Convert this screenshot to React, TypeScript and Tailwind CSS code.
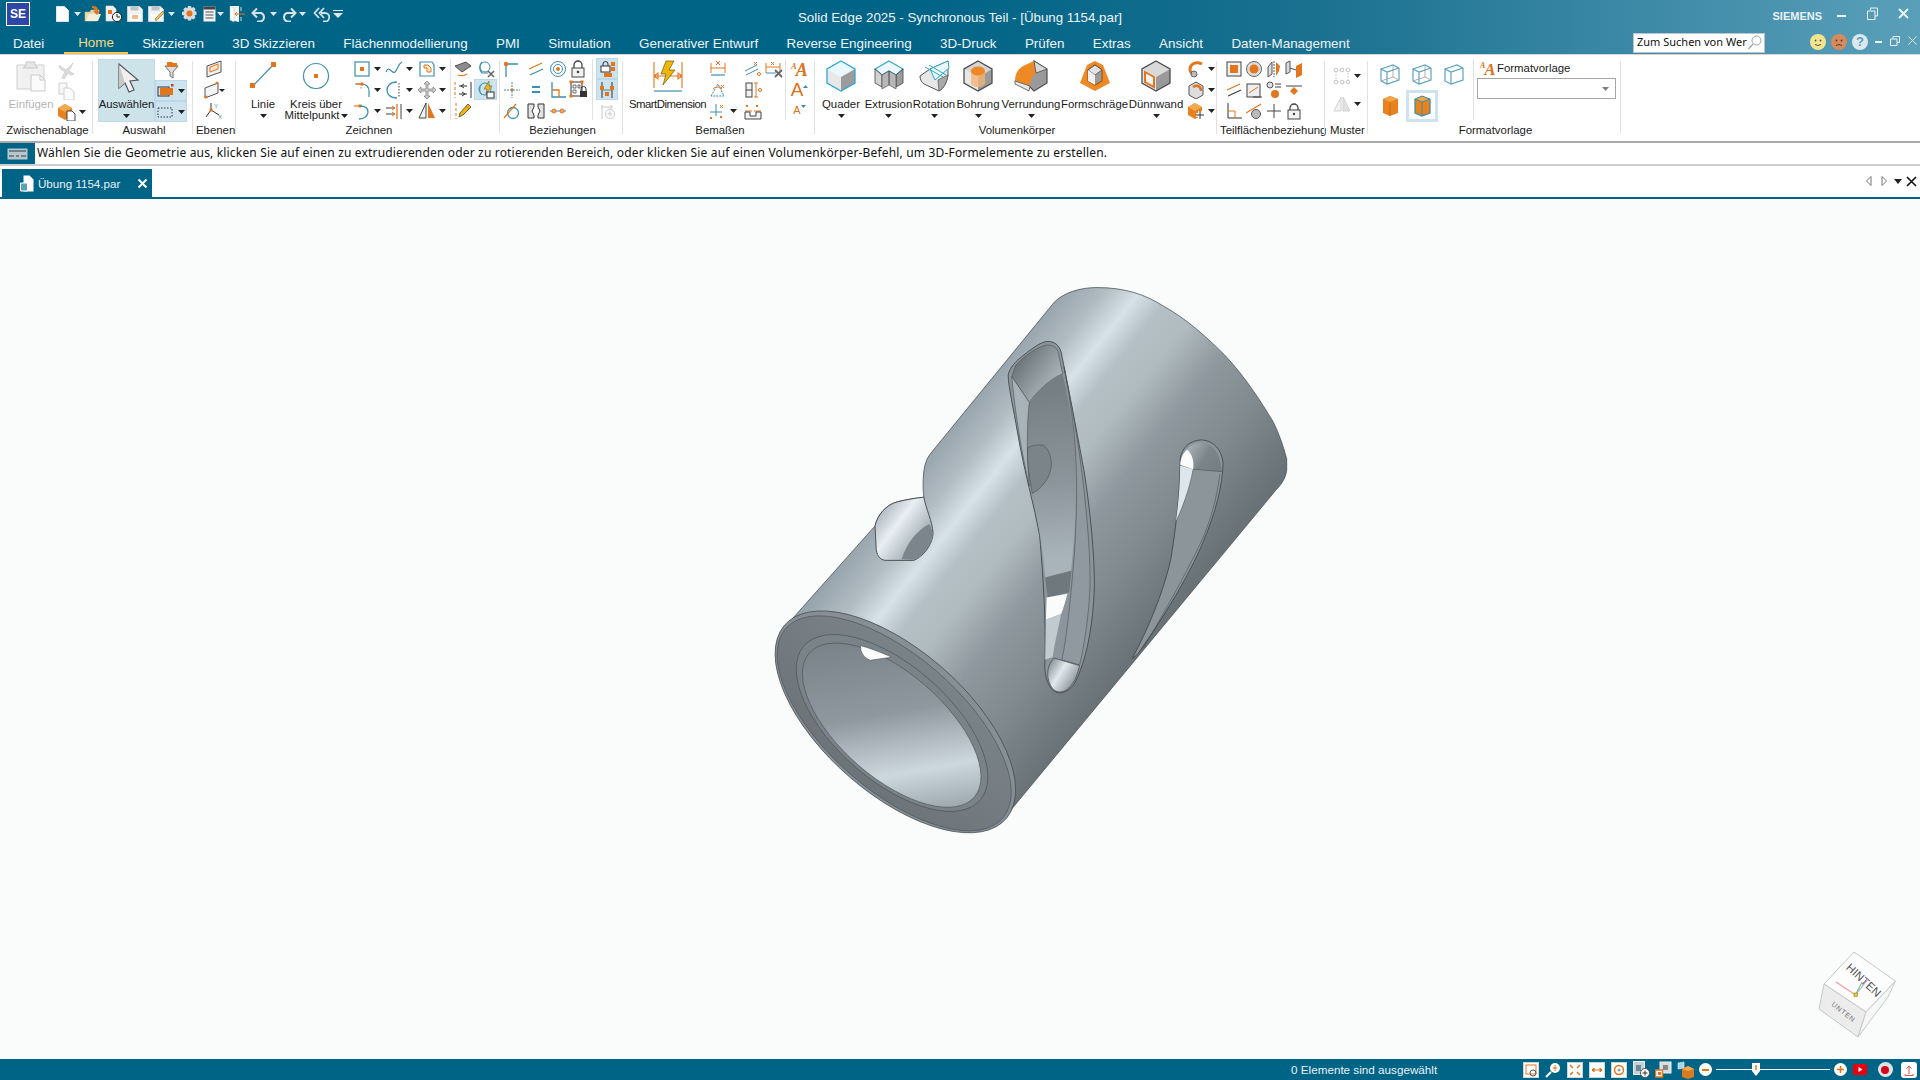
import type { ReactNode } from "react";

const OR = "#e3761c";
const TL = "#3d8fae";

function Px({ w = 18, h = 18, children }: { w?: number; h?: number; children: ReactNode }) {
  return (
    <svg width={w} height={h} viewBox={`0 0 ${w} ${h}`} className="block shrink-0">
      {children}
    </svg>
  );
}

function Arrow({ light = false }: { light?: boolean }) {
  return (
    <svg width="7" height="4" viewBox="0 0 7 4" className="block shrink-0">
      <path d="M0 0h7L3.5 4z" fill={light ? "#dfe8ec" : "#222"} />
    </svg>
  );
}

function Dot({ x, y, s = 4, c = OR }: { x: number; y: number; s?: number; c?: string }) {
  return <rect x={x - s / 2} y={y - s / 2} width={s} height={s} fill={c} />;
}

/* ---------- quick access toolbar ---------- */
const qat = (
  <div className="flex items-center ml-[13px] h-full">
    <div className="w-[18px] flex justify-center ml-[10px]">
      <Px w={13} h={16}><path d="M.5.5h8l4 4v11H.5z" fill="#fff" stroke="#dfe8ec" /></Px>
    </div>
    <div className="w-[8px] ml-[3px]"><Arrow light /></div>
    <div className="ml-[2px]">
      <Px w={18} h={17}>
        <path d="M1 7h5l1-2h8l-2 11H1z" fill="#e9d9ae" stroke="#c8b98a" strokeWidth=".6" />
        <path d="M2 16l3-7h12l-3 7z" fill="#f6f0da" />
        <path d="M8 1c4 0 6 1 6 5h2l-3 4-4-4h2c0-2-1-3-3-3z" fill={OR} />
      </Px>
    </div>
    <div className="ml-[3px]">
      <Px w={18} h={17}>
        <path d="M1 1h7l3 3v12H1z" fill="#f1f1f1" stroke="#ddd" strokeWidth=".6" />
        <rect x="3" y="5" width="4" height="4" fill={OR} />
        <circle cx="12" cy="12" r="4.6" fill="#f4f4f4" stroke="#222" />
        <path d="M12 9v3h3" fill="none" stroke="#222" />
      </Px>
    </div>
    <div className="ml-[4px]">
      <Px w={16} h={16}>
        <path d="M.5.5h12l3 3v12H.5z" fill="#f2f2f2" stroke="#c9d3d8" />
        <path d="M3.5.5h8v4h-8z" fill="#bcc4c8" />
        <path d="M3 8h10v7H3z" fill="#fff" />
        <path d="M5 10h6M5 12h6" stroke={OR} />
      </Px>
    </div>
    <div className="ml-[5px]">
      <Px w={17} h={16}>
        <path d="M.5.5h12l3 3v12H.5z" fill="#f2f2f2" stroke="#c9d3d8" />
        <path d="M3.5.5h8v4h-8z" fill="#bcc4c8" />
        <path d="M3 8h7v7H3z" fill="#fff" />
        <path d="M8 15l8-8-1-2-8 8z" fill="#f4c142" stroke="#555" strokeWidth=".5" />
      </Px>
    </div>
    <div className="ml-[3px]"><Arrow light /></div>
    <div className="ml-[7px]">
      <Px w={15} h={15}>
        <path d="M6 0h3l.5 2 2-1 2 2-1 2 2 .8v3l-2 .7 1 2-2 2-2-1-.5 2H6l-.7-2-2 1-2-2 1-2L0 9V6l2.300-.7-1-2 2-2 2 1z" fill="#d9dcdc" />
        <circle cx="7.5" cy="7.5" r="3" fill={OR} />
      </Px>
    </div>
    <div className="ml-[6px]">
      <Px w={13} h={16}>
        <rect x=".5" y=".5" width="12" height="15" fill="#f2f2f2" />
        <rect x=".5" y=".5" width="12" height="3" fill="#444" />
        <path d="M2.5 6h8M2.5 9h8M2.5 12h8" stroke="#555" />
      </Px>
    </div>
    <div className="ml-[1px]"><Arrow light /></div>
    <div className="ml-[5px]">
      <Px w={18} h={18}>
        <path d="M1 1h9v16l-9-2z" fill="#f5f5f5" />
        <path d="M1 1l4 2v14l-4-2z" fill="#fff" stroke="#aebcc3" strokeWidth=".5" />
        <path d="M12 2v4M12 12v4" stroke="#cfe0e6" />
        <path d="M7 9h9M8 7l-2 2 2 2" stroke={OR} fill="none" />
      </Px>
    </div>
    <div className="ml-[4px]">
      <Px w={17} h={17}>
        <path d="M2 8h8a4.5 4.5 0 0 1 0 8.500H6M6 3.500L1.500 8 6 12.500" fill="none" stroke="#d6e0e5" strokeWidth="2" />
      </Px>
    </div>
    <div className="ml-[2px]"><Arrow light /></div>
    <div className="ml-[3px]">
      <Px w={17} h={17}>
        <path d="M15 8H7a4.5 4.5 0 0 0 0 8.500h4M11 3.500L15.500 8 11 12.500" fill="none" stroke="#d6e0e5" strokeWidth="2" />
      </Px>
    </div>
    <div className="ml-[2px]"><Arrow light /></div>
    <div className="ml-[6px]">
      <Px w={18} h={17}>
        <path d="M9 8h4a4 4 0 0 1 0 8.500H11M7 3L2.500 8 7 13M12 3L7.500 8 12 13" fill="none" stroke="#d6e0e5" strokeWidth="1.800" />
      </Px>
    </div>
    <div className="ml-[3px] flex flex-col gap-[2px]">
      <div className="h-[1px] w-[10px] bg-[#dfe8ec]" />
      <Px w={10} h={5}><path d="M0 0h10L5 5z" fill="#dfe8ec" /></Px>
    </div>
  </div>
);

/* ---------- ribbon helpers ---------- */
function Sep({ inner = false }: { inner?: boolean }) {
  return <div className={inner ? "w-px h-[61px] mt-[1px] bg-[#e1e1e1] shrink-0" : "w-px h-[73px] mt-[6px] bg-[#e1e1e1] shrink-0"} />;
}

function Group({ w, label, children }: { w: string; label: string; children: ReactNode }) {
  return (
    <div className={`${w} shrink-0 flex flex-col pt-[3px]`}>
      <div className="flex h-[63px]">{children}</div>
      <div className="h-[18px] pl-[3px] leading-[18px] text-center text-[11.4px] text-[#1a1a1a] whitespace-nowrap">{label}</div>
    </div>
  );
}

function Big({ w, label, arrow = true, icon, muted = false }: { w: string; label: ReactNode; arrow?: boolean; icon: ReactNode; muted?: boolean }) {
  return (
    <div className={`${w} shrink-0 flex flex-col items-center`}>
      <div className="h-[40px] pb-1 flex items-center justify-center">{icon}</div>
      <div className={`h-[13px] leading-[13px] text-[11.4px] whitespace-nowrap ${muted ? "text-[#b4b4b4]" : "text-[#1a1a1a]"}`}>{label}</div>
      {arrow && <div className="mt-[3px]"><Arrow /></div>}
    </div>
  );
}

function Cell({ icon, arrow = false, on = false }: { icon: ReactNode; arrow?: boolean; on?: boolean }) {
  return (
    <div className={`h-[21px] flex items-center justify-center gap-[4px] ${on ? "bg-[#cde3ee] border border-[#bcd6ea]" : ""}`}>
      {icon}
      {arrow && <Arrow />}
    </div>
  );
}

/* cell that starts its icon at the left edge, the drop arrow follows */
function Left({ icon, arrow = false }: { icon: ReactNode; arrow?: boolean }) {
  return (
    <div className="h-[21px] flex items-center gap-[3px]">
      {icon}
      {arrow && <Arrow />}
    </div>
  );
}

function Hex({ s = "#4d4d4d", t = "#d9d9d9", l = "#e8e8e8", r = "#9a9a9a", children }: { s?: string; t?: string; l?: string; r?: string; children?: ReactNode }) {
  return (
    <Px w={32} h={32}>
      <path d="M16 1L30 9 16 17 2 9z" fill={t} />
      <path d="M2 9L16 17V31L2 23z" fill={l} />
      <path d="M30 9L16 17V31L30 23z" fill={r} />
      <path d="M16 1L30 9V23L16 31 2 23V9z" fill="none" stroke={s} strokeWidth="1.3" />
      {children}
    </Px>
  );
}

function Wire({ back = true, solid = false, edge = false }: { back?: boolean; solid?: boolean; edge?: boolean }) {
  if (solid) {
    return (
      <Px w={22} h={22}>
        <path d="M4 4l7-3 8 3v14l-8 3-7-3z" fill="#e8821e" />
        <path d="M4 4l7 3 8-3-8-3z" fill="#f3a445" stroke={edge ? TL : "none"} />
        <path d="M11 7v14" stroke={edge ? TL : "#c96b12"} />
        <path d="M4 4v14l7 3 8-3V4" fill="none" stroke={edge ? TL : "none"} strokeWidth="1.3" />
      </Px>
    );
  }
  return (
    <Px w={22} h={22}>
      <path d="M2 6l12-4 6 3v12l-12 4-6-3z" fill="none" stroke="#5aa3bf" strokeWidth="1.2" />
      <path d="M2 6l6 3 12-4M8 9v12" fill="none" stroke="#5aa3bf" strokeWidth="1.2" />
      {back && <path d="M14 2v12l-12 4M14 14l6 3" fill="none" stroke="#a0a8ac" strokeWidth=".9" />}
    </Px>
  );
}

/* ---------- viewport drawing ---------- */
function Part() {
  const line = "#454d51";
  return (
    <svg width="580" height="600" viewBox="0 0 1568 1568" preserveAspectRatio="none" className="absolute left-[740px] top-[61px]">
      <defs>
        <linearGradient id="body" gradientUnits="userSpaceOnUse" x1="300" y1="760" x2="890" y2="1250">
          <stop offset="0" stopColor="#98a4ac" />
          <stop offset=".12" stopColor="#b0bbc2" />
          <stop offset=".22" stopColor="#d7e1e8" />
          <stop offset=".31" stopColor="#b5c0c6" />
          <stop offset=".42" stopColor="#b0bbc0" />
          <stop offset=".58" stopColor="#8e989e" />
          <stop offset=".78" stopColor="#7f898e" />
          <stop offset="1" stopColor="#697276" />
        </linearGradient>
        <linearGradient id="bore" gradientUnits="userSpaceOnUse" x1="240" y1="1030" x2="650" y2="1380">
          <stop offset="0" stopColor="#788187" />
          <stop offset=".42" stopColor="#8f989e" />
          <stop offset=".72" stopColor="#cdd8de" />
          <stop offset=".86" stopColor="#adb8be" />
          <stop offset="1" stopColor="#8b959b" />
        </linearGradient>
        <linearGradient id="ring" x1="0" y1="0" x2="0" y2="1">
          <stop offset="0" stopColor="#7a8388" />
          <stop offset="1" stopColor="#6c7478" />
        </linearGradient>
        <linearGradient id="notch" gradientUnits="userSpaceOnUse" x1="370" y1="660" x2="510" y2="770">
          <stop offset="0" stopColor="#a9b4bb" />
          <stop offset=".35" stopColor="#e9eff3" />
          <stop offset=".7" stopColor="#b0bbc1" />
          <stop offset="1" stopColor="#8a949a" />
        </linearGradient>
        <linearGradient id="slotTop" gradientUnits="userSpaceOnUse" x1="770" y1="250" x2="860" y2="320">
          <stop offset="0" stopColor="#6f787d" />
          <stop offset="1" stopColor="#adb8be" />
        </linearGradient>
        <linearGradient id="slotMid" gradientUnits="userSpaceOnUse" x1="820" y1="340" x2="860" y2="780">
          <stop offset="0" stopColor="#757f84" />
          <stop offset=".55" stopColor="#8b959b" />
          <stop offset="1" stopColor="#a9b4ba" />
        </linearGradient>
        <linearGradient id="slotCap" gradientUnits="userSpaceOnUse" x1="835" y1="1060" x2="910" y2="1110">
          <stop offset="0" stopColor="#8f999f" />
          <stop offset=".4" stopColor="#e2e9ed" />
          <stop offset="1" stopColor="#838d93" />
        </linearGradient>
        <linearGradient id="capTwo" gradientUnits="userSpaceOnUse" x1="1210" y1="490" x2="1300" y2="550">
          <stop offset="0" stopColor="#a7b2b8" />
          <stop offset=".5" stopColor="#7a8489" />
          <stop offset="1" stopColor="#747e83" />
        </linearGradient>
      </defs>

      <path
        d="M130 950L365 695C372 665 395 640 425 632C450 626 475 622 497 620C493 590 495 550 502 530C505 520 510 512 520 500L850 110C875 85 920 72 965 72C1040 72 1095 90 1144 120C1210 155 1265 205 1310 248C1370 310 1415 380 1442 424C1458 455 1470 490 1478 520V550C1475 570 1465 585 1450 600L730 1440 600 1490z"
        fill="url(#body)"
        stroke={line}
        strokeWidth="2"
      />

      {/* notch at the upper edge */}
      <path d="M365 695C372 665 395 640 425 632C450 626 475 622 497 620C502 650 520 680 522 715C520 745 495 775 470 785H395C378 785 368 770 368 750z" fill="url(#notch)" stroke={line} strokeWidth="2.500" />
      <path d="M437 782C450 740 480 705 512 690C520 705 522 720 520 730C510 755 490 775 470 783z" fill="#7b858b" />

      {/* long slot */}
      <path d="M830 213C850 212 862 222 868 240C885 320 905 420 930 550C948 660 958 770 958 850C955 960 935 1050 905 1105C890 1130 860 1140 843 1122C825 1100 822 1070 825 1040C826 950 822 850 810 720C795 640 770 560 750 450C740 390 725 330 725 300C730 280 745 265 765 250C785 235 810 215 830 213z" fill="#8b959b" stroke={line} strokeWidth="2.500" />
      <path d="M735 305L745 275C770 250 800 228 830 222C848 222 856 230 860 240L872 297C840 310 805 340 782 372z" fill="url(#slotTop)" stroke={line} strokeWidth="1.500" />
      <path d="M782 372C805 340 840 310 872 297C885 350 900 420 906 500C912 620 905 720 895 812L825 830C818 740 800 650 782 590C775 520 775 430 782 372z" fill="url(#slotMid)" />
      <path d="M735 305L782 372C775 430 775 520 782 590C770 540 745 420 735 305z" fill="#a8b3b9" stroke={line} strokeWidth="1.500" />
      <path d="M778 490C790 484 808 482 820 484C835 495 842 515 842 535C840 565 820 595 790 610C783 570 775 530 778 490z" fill="#7a8489" stroke={line} strokeWidth="1.500" />
      <path d="M876 280C895 370 912 460 925 560C940 680 948 780 946 860C942 940 930 1010 918 1058L870 1045C885 980 895 870 903 780C912 660 912 560 905 470C898 400 888 340 876 280z" fill="#8f999f" stroke={line} strokeWidth="1.500" />
      <path d="M825 830L896 812 890 868 832 882z" fill="#6e787d" />
      <path d="M829 882L885 872C880 890 875 910 868 925L827 940z" fill="#fafcfb" />
      <path d="M827 940L868 925C860 965 850 1005 845 1038L825 1044z" fill="#c0cbd1" />
      <path d="M848 1040L918 1060C912 1085 905 1100 895 1112C880 1130 860 1135 845 1120C828 1098 826 1065 848 1040z" fill="url(#slotCap)" stroke={line} strokeWidth="2" />

      {/* short slot */}
      <path d="M1190 520C1195 490 1215 472 1248 470C1280 472 1302 495 1306 530C1305 590 1285 660 1255 730C1225 800 1170 900 1075 1030L1060 1042C1100 970 1145 870 1165 780C1180 690 1190 600 1190 520z" fill="#8b959a" stroke={line} strokeWidth="2.500" />
      <path d="M1208 495C1220 482 1235 476 1250 476C1280 480 1298 505 1303 553L1225 546C1228 525 1222 505 1208 495z" fill="url(#capTwo)" />
      <path d="M1190 535C1192 515 1198 505 1208 495C1222 505 1228 525 1225 547z" fill="#fafcfb" />
      <path d="M1190 538L1225 547C1218 590 1200 640 1178 685C1185 640 1190 590 1190 538z" fill="#dde6ea" />
      <path d="M1225 547L1303 553" stroke={line} strokeWidth="1.500" />
      <path d="M1297 560C1290 620 1270 690 1245 740C1210 810 1160 900 1090 1015" fill="none" stroke={line} strokeWidth="1.500" />
      <path d="M1225 547C1215 600 1195 650 1178 685" fill="none" stroke={line} strokeWidth="1.500" />

      {/* front face with bore */}
      <g transform="rotate(39.7 420 1207)">
        <ellipse cx="420" cy="1207" rx="392" ry="190" fill="#868f95" stroke={line} strokeWidth="2" />
        <ellipse cx="420" cy="1212" rx="384" ry="178" fill="url(#ring)" stroke={line} strokeWidth="1.500" />
        <ellipse cx="415" cy="1215" rx="312" ry="152" fill="#7a8388" stroke={line} strokeWidth="1.500" />
        <ellipse cx="418" cy="1220" rx="292" ry="138" fill="url(#bore)" stroke={line} strokeWidth="1.500" />
      </g>
      <path d="M326 1008C345 1012 380 1025 410 1038L352 1046C335 1040 325 1025 326 1008z" fill="#fbfdfd" stroke={line} strokeWidth="1.500" />
    </svg>
  );
}

function ViewCube() {
  return (
    <svg width="95" height="100" viewBox="0 0 95 100" className="absolute left-[1810px] top-[746px]">
      <path d="M44 7L85.500 36 56 67 14 39z" fill="#fdfdfd" stroke="#c4c8c8" />
      <path d="M14 39L56 67 48 92 9 64z" fill="#ececec" stroke="#c4c8c8" />
      <path d="M85.500 36L56 67 48 92 78 52z" fill="#f6f6f6" stroke="#c4c8c8" />
      <text x="51" y="38" textAnchor="middle" transform="rotate(43 51 38)" fontSize="11.5" fontFamily="'Liberation Sans',sans-serif" fill="#555">HINTEN</text>
      <text x="32" y="69" textAnchor="middle" transform="rotate(38 32 69)" fontSize="7" letterSpacing=".8" fontFamily="'Liberation Sans',sans-serif" fill="#777">UNTEN</text>
      <path d="M45.500 50L26 37" stroke="#ef9a9a" strokeWidth="1.2" />
      <path d="M45.500 50L52 37" stroke="#7fc77f" strokeWidth="1.2" />
      <path d="M45.500 50L58 34" stroke="#a9a9f0" strokeWidth="1.2" />
      <rect x="44" y="48" width="3.5" height="3.5" fill="#e3d21c" stroke="#6b6b20" strokeWidth=".5" />
    </svg>
  );
}

/* ---------- status bar icons ---------- */
function SBox({ children }: { children: ReactNode }) {
  return (
    <Px w={16} h={16}>
      <rect x=".5" y=".5" width="15" height="15" fill="#fff" stroke="#c9d6dc" />
      {children}
    </Px>
  );
}

export default function App() {
  const tabs = ["Skizzieren", "3D Skizzieren", "Flächenmodellierung", "PMI", "Simulation", "Generativer Entwurf", "Reverse Engineering", "3D-Druck", "Prüfen", "Extras", "Ansicht", "Daten-Management"];

  return (
    <div className="w-[1920px] h-[1080px] overflow-hidden flex flex-col bg-white font-['Liberation_Sans',Arial,sans-serif]">
      {/* title bar + menu */}
      <header className="h-[54px] shrink-0 bg-[linear-gradient(90deg,#006487_0%,#006487_48%,#19708f_68%,#5a9fba_100%)] text-[#eef5f8]">
        <div className="h-[27px] grid grid-cols-[1fr_auto_1fr] items-center">
          <div className="flex items-center h-full">
            <div className="ml-[6px] w-[24px] h-[24px] bg-[#2c47a7] border border-white flex items-center justify-center text-[12px] font-bold text-white">SE</div>
            {qat}
          </div>
          <div className="text-[13.3px] pt-[8px] leading-[19px] text-center">Solid Edge 2025 - Synchronous Teil - [Übung 1154.par]</div>
          <div className="flex items-center justify-end h-full">
            <span className="text-[11px] font-bold text-[#e9f2f5] mr-[4px] mt-[5px]">SIEMENS</span>
            <div className="w-[31px] flex justify-center pt-[4px]"><div className="w-[9px] h-[2px] bg-[#eef5f8]" /></div>
            <div className="w-[31px] flex justify-center">
              <Px w={11} h={13}><path d="M3.500 3V1h7v8H8M.5 4h7.500v8.500H.5z" fill="none" stroke="#eef5f8" /></Px>
            </div>
            <div className="w-[31px] mr-[1px] flex justify-center">
              <Px w={11} h={11}><path d="M1 1l9 9M10 1l-9 9" stroke="#eef5f8" strokeWidth="1.8" /></Px>
            </div>
          </div>
        </div>
        <div className="h-[27px] flex items-center">
          <div className="pl-[13px] w-[64px] text-[13.4px] pt-[6px] leading-[21px] h-[27px]">Datei</div>
          <div className="w-[64px] h-[27px] text-center text-[13.4px] pt-[7px] leading-[18px] text-[#f6d981] border-b-2 border-[#f1c64f]">Home</div>
          {tabs.map((t) => (
            <div key={t} className="px-[14.2px] h-[27px] text-[13.4px] pt-[7px] leading-[20px] whitespace-nowrap">{t}</div>
          ))}
          <div className="flex-1" />
          <div className="w-[132px] h-[20px] mt-[4px] bg-white border border-[#b8c6cc] flex items-center pl-[3px] pr-[2px]">
            <span className="text-[11px] text-[#111] whitespace-nowrap w-[110px] font-['Noto_Sans',sans-serif]">Zum Suchen von Wer</span>
            <Px w={15} h={15}><circle cx="9.5" cy="5.5" r="4.5" fill="none" stroke="#9aa5aa" /><path d="M6 9l-4.500 5" stroke="#9aa5aa" strokeWidth="1.3" /></Px>
          </div>
          <div className="ml-[45px] mt-[2px] flex items-center gap-[5px]">
            <Px w={16} h={16}>
              <circle cx="8" cy="8" r="8" fill="#f4e48c" />
              <circle cx="5.5" cy="6.5" r=".9" fill="#555" /><circle cx="10.5" cy="6.5" r=".9" fill="#555" />
              <path d="M5 10.500q3 2 6 0" fill="none" stroke="#555" />
            </Px>
            <Px w={16} h={16}>
              <circle cx="8" cy="8" r="8" fill="#d88a5c" />
              <circle cx="5.5" cy="6.5" r=".9" fill="#444" /><circle cx="10.5" cy="6.5" r=".9" fill="#444" />
              <path d="M5 11.500q3-2 6 0" fill="none" stroke="#444" />
            </Px>
            <div className="w-[16px] h-[16px] rounded-full bg-[#dbe8ee] text-[#5a9fba] text-[13px] leading-[16px] font-bold text-center">?</div>
          </div>
          <div className="ml-[7px] w-[7px] h-[2px] mt-[3px] bg-[#eef5f8]" />
          <div className="ml-[8px]"><Px w={10} h={10}><path d="M3 2.500V.5h6.500v6H7.500M.5 3h6.500v6.500H.5z" fill="none" stroke="#eef5f8" /></Px></div>
          <div className="ml-[8px] mr-[3px]"><Px w={9} h={9}><path d="M.5.5l8 8M8.500.5l-8 8" stroke="#eef5f8" /></Px></div>
        </div>
      </header>

      {/* ribbon */}
      <div className="h-[87px] shrink-0 border-t border-[#d6d6d6] flex bg-white">
        <Group w="w-[92px]" label="Zwischenablage">
          <div className="w-[5px]" />
          <Big
            w="w-[52px]"
            label="Einfügen"
            arrow={false}
            muted
            icon={
              <Px w={32} h={32}>
                <path d="M2 5h27v24H2z" fill="#f1f1f1" stroke="#cfcfcf" />
                <path d="M11 5V2h9v3l3 3H8z" fill="#e6e6e6" stroke="#c9c9c9" />
                <path d="M16 15h9l5 5v11H16z" fill="#fbfbfb" stroke="#c9c9c9" />
                <path d="M25 15v5h5" fill="none" stroke="#c9c9c9" />
              </Px>
            }
          />
          <div className="w-[34px] pt-[1px]">
            <Left icon={<Px w={18} h={18}><path d="M2 4c3 3 5 3 7 5l7-7-4 8 5 3c-2 2-4 1-6-1l-3 5c-1 1-3 1-3-1l3-5C6 9 2 9 2 4z" fill="#dcdcdc" stroke="#c6c6c6" strokeWidth=".6" /></Px>} />
            <Left icon={<Px w={18} h={18}><path d="M2 1h8v11H2z" fill="#f6f6f6" stroke="#cfcfcf" /><path d="M7 6h6l4 4v8H7z" fill="#fbfbfb" stroke="#cfcfcf" /></Px>} />
            <Left
              arrow
              icon={
                <Px w={19} h={18}>
                  <path d="M1 5l7-4 7 4v8l-7 4-7-4z" fill="#e7811f" />
                  <path d="M1 5l7 4 7-4-7-4z" fill="#f3a950" />
                  <path d="M10 8h5l3 3v7h-8z" fill="#fff" stroke="#333" strokeWidth=".9" />
                </Px>
              }
            />
          </div>
        </Group>
        <Sep />

        <Group w="w-[99px]" label="Auswahl">
          <div className="w-[5px]" />
          <div className="w-[57px] h-[63px] mt-[1px] bg-[#cde3ea] border border-[#c2d9ec] flex flex-col items-center">
            <div className="h-[38px] flex items-center">
              <Px w={26} h={32}><path d="M5 1v24l6-5 4 9 5-2-4-9 8-1z" fill="#f0f0f0" stroke="#555" strokeWidth="1.2" /><path d="M5 1v24l6-5z" fill="#c9c9c9" /></Px>
            </div>
            <div className="text-[11.4px] leading-[13px] text-[#1a1a1a]">Auswählen</div>
            <div className="mt-[3px]"><Arrow /></div>
          </div>
          <div className="w-[32px] mt-[1px]">
            <Cell icon={<Px w={15} h={18}><path d="M1 5h13L9 11v6l-3-2v-4z" fill="#dedede" stroke="#555" strokeWidth=".8" /><path d="M3 1h5l1 1h4v4H3z" fill={OR} /></Px>} />
            <Cell on arrow icon={<Px w={17} h={13}><rect x="1" y="3" width="11" height="9" fill="none" stroke="#333" /><rect x="3" y="4" width="13" height="7" fill={OR} /><rect x="14" y="0" width="2.5" height="2.5" fill="#d33" /></Px>} />
            <Cell on arrow icon={<Px w={17} h={12}><rect x="1" y="2" width="14" height="9" fill="none" stroke="#333" strokeDasharray="1.5 1.5" /></Px>} />
          </div>
        </Group>
        <Sep />

        <Group w="w-[42px]" label="Ebenen">
          <div className="w-full flex flex-col items-center">
            <Cell icon={<Px w={18} h={18}><path d="M2 6l14-5v11L2 17z" fill="#efefef" stroke="#555" /><path d="M5 7l8-3v5l-8 3z" fill="#fbe4cf" stroke={OR} /></Px>} />
            <Cell icon={<Px w={22} h={18}><path d="M2 7l13-5v10L2 17z" fill="#f4f4f4" stroke="#555" /><Dot x={14} y={2} s={2.5} /><Dot x={3} y={16} s={2.5} /><path d="M16 8h6l-3 3z" fill="#222" /></Px>} />
            <Cell icon={<Px w={18} h={18}><path d="M6 8V1M6 8l-5 7M6 8l8 5" stroke="#333" /><Dot x={6} y={8} s={3} /><text x="9" y="6" fontSize="6" fill={TL}>Y</text><text x="13" y="17" fontSize="6" fill={TL}>X</text></Px>} />
          </div>
        </Group>
        <Sep />

        <Group w="w-[263px]" label="Zeichnen">
          <Big
            w="w-[54px]"
            label="Linie"
            icon={<Px w={30} h={30}><path d="M5 25L25 4" stroke={TL} strokeWidth="1.2" /><rect x="2" y="22" width="5" height="5" fill={OR} /><rect x="23" y="1" width="5" height="5" fill={OR} /></Px>}
          />
          <div className="w-[52px] shrink-0 flex flex-col items-center">
            <div className="h-[40px] pb-1 flex items-center">
              <Px w={28} h={28}><circle cx="14" cy="14" r="12.5" fill="none" stroke={TL} strokeWidth="1.2" /><rect x="12" y="12" width="4" height="4" fill={OR} /></Px>
            </div>
            <div className="text-[11.4px] leading-[12px] mt-[1px] text-[#1a1a1a] text-center whitespace-nowrap">
              Kreis über
              <div className="flex items-center gap-[1px] leading-[11px]">Mittelpunkt<Arrow /></div>
            </div>
          </div>
          <div className="w-[11px]" />
          <div className="grid grid-cols-[32px_33px_32px]">
            <Left arrow icon={<Px><rect x="2" y="2" width="14" height="14" fill="#fff" stroke={TL} strokeWidth="1.2" /><Dot x={9} y={9} s={4} /></Px>} />
            <Left arrow icon={<Px><path d="M1 12c3-8 6 3 9 0s3-8 7-10" fill="none" stroke={TL} strokeWidth="1.2" /></Px>} />
            <Left arrow icon={<Px><path d="M2 2h12l2 3v11H2z" fill="none" stroke={TL} strokeWidth="1.2" /><path d="M6 5h4l3 3v4H9V8H6z" fill="#fde7d3" stroke={OR} /></Px>} />
            <Left arrow icon={<Px><path d="M2 3h7c4 0 7 3 7 7v6" fill="none" stroke={TL} strokeWidth="1.2" /><path d="M3 3h4" stroke={OR} strokeWidth="1.2" /><path d="M8 3v5" stroke={OR} strokeDasharray="1.5 1.5" /><Dot x={9} y={3} s={3} /></Px>} />
            <Left arrow icon={<Px><path d="M12 1C5 1 2 5 2 9s3 8 10 8" fill="none" stroke={TL} strokeWidth="1.3" /><path d="M14 2v14" stroke="#444" strokeDasharray="1.5 1.5" /></Px>} />
            <Left arrow icon={<Px><path d="M9 0l3 3h-2v5h5V6l3 3-3 3v-2h-5v5h2l-3 3-3-3h2v-5H3v2L0 9l3-3v2h5V3H6z" fill="#cfcfcf" stroke="#666" strokeWidth=".6" /></Px>} />
            <Left arrow icon={<Px><path d="M1 4h6" stroke={OR} strokeWidth="1.2" /><Dot x={7} y={4} s={3} /><path d="M7 4c5 0 8 2 8 6s-4 7-9 7" fill="none" stroke={TL} strokeWidth="1.3" /></Px>} />
            <Left arrow icon={<Px><path d="M1 6h9M1 12h9" stroke="#444" /><path d="M12 2v15" stroke={OR} strokeWidth="1.3" /><path d="M16 2v15" stroke="#444" /><path d="M7 4l3 2-3 2M7 10l3 2-3 2" fill="none" stroke={OR} /></Px>} />
            <Left arrow icon={<Px><path d="M8 1L1 16h7z" fill="#f2f2f2" stroke="#444" /><path d="M10 1l7 15h-7z" fill={OR} /></Px>} />
          </div>
          <Sep inner />
          <div className="grid grid-cols-[23px_23px] grid-rows-[21px_21px_21px]">
            <Cell icon={<Px><path d="M1 6l11-4 5 4-9 6z" fill="#8c8c8c" stroke="#333" strokeWidth=".8" /><path d="M4 15c3 1 6 1 9-1" fill="none" stroke={OR} strokeWidth="1.3" /></Px>} />
            <Cell icon={<Px><path d="M5 2c-3 3-3 8 0 11h6" fill="none" stroke={TL} strokeWidth="1.2" /><circle cx="8" cy="7" r="5" fill="none" stroke={TL} /><path d="M11 11l6 6M17 11l-6 6" stroke="#666" strokeWidth="1.6" /></Px>} />
            <Cell icon={<Px><path d="M1 1v16" stroke={OR} strokeDasharray="3 2" /><path d="M17 1v16" stroke="#333" /><path d="M5 5h8M10 3l-3 2 3 2M5 13h8M8 11l3 2-3 2" fill="none" stroke="#333" /></Px>} />
            <Cell on icon={<Px><circle cx="8" cy="8" r="6" fill="none" stroke={TL} /><path d="M5 3c-3 3-3 8 0 11" fill="none" stroke={TL} /><path d="M12 0L7 8h3l-1 5 6-8h-3z" fill="#f2b705" stroke="#555" strokeWidth=".5" /><rect x="10" y="11" width="7" height="6" fill="#fff" stroke="#333" /></Px>} />
            <Cell icon={<Px><path d="M2 1v16" stroke={OR} strokeDasharray="3 2" /><path d="M5 15l1-4 8-9 3 3-8 8z" fill="#f2b705" stroke="#444" strokeWidth=".8" /><path d="M12 4l3 3" stroke={OR} /></Px>} />
          </div>
        </Group>
        <Sep />

        <Group w="w-[122px]" label="Beziehungen">
          <div className="grid grid-cols-[24px_24px_20px_20px] grid-rows-[21px_21px_21px]">
            <Cell icon={<Px><path d="M3 4h12M3 4v13" fill="none" stroke={TL} strokeWidth="1.3" /><circle cx="3" cy="4" r="2.2" fill={OR} /></Px>} />
            <Cell icon={<Px><path d="M2 9L15 3" stroke={OR} strokeWidth="1.3" /><path d="M3 15L16 9" stroke={TL} strokeWidth="1.3" /></Px>} />
            <Cell icon={<Px><circle cx="9" cy="9" r="7.5" fill="none" stroke={TL} /><circle cx="9" cy="9" r="4.5" fill="none" stroke={TL} /><circle cx="9" cy="9" r="2" fill={OR} /></Px>} />
            <Cell icon={<Px><path d="M5 8V5a4 4 0 0 1 8 0v3" fill="none" stroke="#444" strokeWidth="1.3" /><rect x="3" y="8" width="12" height="9" fill="#f2f2f2" stroke="#444" /><circle cx="9" cy="12" r="1.3" fill="#444" /></Px>} />
            <Cell icon={<Px><path d="M9 1v16M1 9h16" stroke={TL} strokeDasharray="2 1" /><Dot x={9} y={9} s={2.5} /></Px>} />
            <Cell icon={<Px><path d="M5 6h8M5 11h8" stroke={TL} strokeWidth="2" /></Px>} />
            <Cell icon={<Px><path d="M3 1v15h14" fill="none" stroke={TL} strokeWidth="1.3" /><path d="M3 9h7v7" fill="none" stroke={OR} strokeWidth="1.3" /></Px>} />
            <Cell icon={<Px w={19} h={19}><rect x="2" y="2" width="11" height="14" fill="#fff" stroke="#333" /><path d="M4 5h3v3H4zM9 5h2v3H9zM4 10h3v3H4z" fill="none" stroke="#333" strokeWidth=".7" /><Dot x={2} y={2} s={3} /><Dot x={13} y={2} s={3} /><Dot x={2} y={16} s={3} /><path d="M12 11V9a2.5 2.5 0 0 1 5 0v2" fill="none" stroke="#333" /><rect x="11" y="11" width="7" height="6" fill="#333" /></Px>} />
            <Cell icon={<Px><circle cx="10" cy="11" r="5.5" fill="none" stroke={TL} strokeWidth="1.3" /><path d="M1 16L13 2" stroke={OR} strokeWidth="1.3" /></Px>} />
            <Cell icon={<Px><path d="M1 2h6v3L5 9l2 4v3H1zM17 2h-6v3l2 4-2 4v3h6z" fill="#e3e3e3" stroke="#333" /></Px>} />
            <Cell icon={<Px><path d="M1 9h16" stroke={TL} /><circle cx="5" cy="9" r="2" fill="#f1a469" stroke={OR} /><circle cx="13" cy="9" r="2" fill="#f1a469" stroke={OR} /></Px>} />
            <div />
          </div>
          <div className="w-[4px]" />
          <Sep inner />
          <div className="w-[3px]" />
          <div className="w-[22px] flex flex-col">
            <Cell on icon={<Px><path d="M5 6V4a2.5 2.5 0 0 1 5 0v2" fill="none" stroke="#333" /><rect x="3" y="6" width="9" height="6" fill="#fff" stroke="#333" /><Dot x={15} y={4} /><Dot x={15} y={9} /><Dot x={8} y={15} /><Dot x={12} y={15} /></Px>} />
            <Cell on icon={<Px><path d="M4 1v16M14 1v16" stroke="#333" /><path d="M4 9h10" stroke={TL} /><Dot x={4} y={7} /><Dot x={14} y={7} /><Dot x={9} y={13} /></Px>} />
            <Cell icon={<Px><path d="M4 3v14M13 3v5" stroke="#c9c9c9" /><circle cx="12" cy="12" r="4.5" fill="none" stroke="#c9c9c9" /><path d="M12 9.500v5M9.500 12h5M3 5h12" stroke="#c9c9c9" /></Px>} />
          </div>
        </Group>
        <Sep />

        <Group w="w-[191px]" label="Bemaßen">
          <div className="w-[86px] pl-[3px] shrink-0">
            <Big
              w="w-full"
              label={<span className="tracking-[-0.5px]">SmartDimension</span>}
              arrow={false}
              icon={
                <Px w={32} h={32}>
                  <path d="M2 2v26M30 2v26M2 16h28M2 16l4-3v6zM30 16l-4-3v6z" fill="none" stroke={OR} strokeWidth="1.1" />
                  <path d="M2 31h28" stroke={TL} strokeWidth="1.2" />
                  <path d="M22 1h-8l-5 13h5l-3 11 12-15h-6z" fill="#f2b705" stroke="#6b5a12" strokeWidth=".7" />
                </Px>
              }
            />
          </div>
          <div className="grid grid-cols-[34px_20px_22px] grid-rows-[21px_21px_21px]">
            <Left icon={<Px><path d="M2 3v10M16 3v10M2 8h14" stroke={OR} /><path d="M7 1l4 4M11 1L7 5" stroke={OR} /><path d="M2 15h14" stroke={TL} strokeWidth="1.2" /></Px>} />
            <Cell icon={<Px><path d="M1 11L13 5M2 15L14 9" stroke={TL} /><path d="M10 2l3 3M13 2l-3 3" stroke={OR} /><circle cx="15" cy="14" r="1.5" fill="none" stroke={OR} /></Px>} />
            <Cell icon={<Px><path d="M1 3v10M15 3v10M1 7h14" stroke={OR} /><path d="M6 2l3 3M9 2L6 5" stroke={OR} /><path d="M1 13h10" stroke={TL} /><path d="M10 10l7 7M17 10l-7 7" stroke="#666" strokeWidth="1.8" /></Px>} />
            <Left icon={<Px><path d="M2 15L9 3l6 12z" fill="none" stroke={TL} strokeDasharray="2 1" /><path d="M4 8a6 6 0 0 1 9 0" fill="none" stroke={OR} /><path d="M12 4l3 3M15 4l-3 3" stroke={OR} /></Px>} />
            <Cell icon={<Px><rect x="2" y="2" width="6" height="14" fill="#f2f2f2" stroke="#444" /><path d="M2 9h6" stroke="#444" /><path d="M12 2v14M10 2h4M10 16h4" stroke={OR} /><circle cx="16" cy="9" r="1.5" fill="none" stroke={OR} /></Px>} />
            <div />
            <Left arrow icon={<Px><path d="M7 2v12M1 10h12" stroke={TL} /><path d="M11 3l3 3M14 3l-3 3" stroke={OR} /><path d="M1 15l2 2M3 15l-2 2M11 14l2 2M13 14l-2 2" stroke={OR} /></Px>} />
            <Cell icon={<Px><path d="M1 9h7M10 9h7" stroke={OR} /><path d="M2 3l2 2M4 3L2 5M12 3l2 2M14 3l-2 2" stroke={OR} /><path d="M1 10v7h16v-7h-5v4H6v-4z" fill="#f2f2f2" stroke="#444" /></Px>} />
            <div />
          </div>
          <Sep inner />
          <div className="w-[27px] flex flex-col items-center font-['Liberation_Serif',serif] text-[#e0701a]">
            <div className="h-[21px] flex items-end leading-none font-bold italic"><span className="text-[8px] mb-[8px]">A</span><span className="text-[18px] -ml-[1px]">A</span></div>
            <div className="h-[21px] flex items-center text-[19px] leading-none font-['Liberation_Sans',sans-serif]">A<Px w={5} h={10}><path d="M0 3l2.500-3L5 3z" fill={TL} /></Px></div>
            <div className="h-[21px] flex items-center text-[11px] leading-none font-['Liberation_Sans',sans-serif]">A<Px w={5} h={12}><path d="M0 0h5L2.500 3z" fill={TL} /></Px></div>
          </div>
        </Group>
        <Sep />

        <Group w="w-[401px]" label="Volumenkörper">
          <Big w="w-[52px]" label="Quader" icon={
            <Hex s="#2fa8cf" t="#eaf7fc" l="#e8e8e8" r="#9b9b9b" />
          } />
          <Big w="w-[43px]" label="Extrusion" icon={
            <Px w={32} h={32}>
              <path d="M16 1L30 9v14l-7 4V15l-7-4-7 4v12l-7-4V9z" fill="#ededed" />
              <path d="M16 1L30 9l-7 6-7-4-7 4-7-6z" fill="#eef8fc" stroke="#2fa8cf" strokeWidth="1.2" />
              <path d="M30 9v14l-7 4V15z" fill="#9c9c9c" stroke="#444" strokeWidth=".8" />
              <path d="M2 9v14l7 4V15z" fill="#d2d2d2" stroke="#444" strokeWidth=".8" />
              <path d="M9 15l7-4v14l-7 4zM23 15l-7-4v14l7 4z" fill="#b7b7b7" stroke="#444" strokeWidth=".6" />
            </Px>
          } />
          <Big w="w-[48px]" label="Rotation" icon={
            <Px w={34} h={34}>
              <path d="M3 17L13 10l18-8v14c-1 8-5 14-9 16L7 25c-3-2-4-5-4-8z" fill="#e7e7e7" stroke="#555" />
              <path d="M13 10L31 2l1 7-14 12z" fill="#eaf7fc" stroke="#2fa8cf" />
              <path d="M8 8l18 10M12 6l17 10" stroke="#2fa8cf" />
              <path d="M31 16c-1 8-5 14-9 16l-1-11z" fill="#a8a8a8" stroke="#555" strokeWidth=".7" />
            </Px>
          } />
          <Big w="w-[40px]" label="Bohrung" icon={
            <Hex t="#d6d6d6">
              <path d="M9 11v12c0 2 3 4 7 4s7-2 7-4V11z" fill="#f1b477" opacity=".8" />
              <ellipse cx="16" cy="11" rx="7" ry="4.5" fill="#ee8a26" />
            </Hex>
          } />
          <Big w="w-[66px]" label="Verrundung" icon={
            <Px w={34} h={32}>
              <path d="M20 1l13 8v14l-13 8-5-5V14z" fill="#9a9a9a" stroke="#4d4d4d" strokeWidth="1.2" />
              <path d="M20 1L9 6C4 9 1 14 1 21l15 5c0-6 3-11 6-13z" fill="#ee8a26" />
              <path d="M1 21v3l14 7 1-5z" fill="#e9e9e9" stroke="#4d4d4d" strokeWidth=".8" />
              <path d="M20 1l13 8-11 4z" fill="#d9d9d9" stroke="#4d4d4d" strokeWidth=".8" />
            </Px>
          } />
          <Big w="w-[61px]" label="Formschräge" arrow={false} icon={
            <Px w={32} h={32}>
              <path d="M8 5L16 1l8 4 7 18-15 8-15-8z" fill="#ee8a26" />
              <path d="M9 10l7-5 7 5v11l-7 4-7-4z" fill="#9c9c9c" stroke="#a45713" strokeWidth="1.2" />
              <path d="M9 10l7-5 7 5-7 5z" fill="#e2e2e2" stroke="#4d4d4d" strokeWidth=".8" />
              <path d="M9 10l7 5v10l-7-4z" fill="#f0f0f0" />
            </Px>
          } />
          <Big w="w-[62px]" label="Dünnwand" icon={
            <Hex>
              <path d="M5 12l9 5v10l-9-5z" fill="#f6f6f6" stroke={OR} strokeWidth="2" />
            </Hex>
          } />
          <div className="flex-1 flex flex-col items-start">
            <Left arrow icon={<Px><path d="M15 4C9 1 3 4 3 9c0 3 2 5 4 6" fill="none" stroke={OR} strokeWidth="3" /><circle cx="7" cy="14" r="3" fill="#bbb" stroke="#666" /></Px>} />
            <Left arrow icon={<Px><path d="M2 5l7-4 7 4v9l-7 4-7-4z" fill="#ddd" stroke="#555" /><path d="M6 6c5-3 8 0 8 4" fill="none" stroke={OR} strokeWidth="2.5" /></Px>} />
            <Left arrow icon={<Px><path d="M1 5l7-4 7 4v8l-7 4-7-4z" fill="#e7811f" /><path d="M1 5l7 4 7-4-7-4z" fill="#f3a950" /><path d="M13 9v8M9 13h8" stroke="#fff" strokeWidth="3.5" /><path d="M13 9v8M9 13h8" stroke="#333" /></Px>} />
          </div>
        </Group>
        <Sep />

        <Group w="w-[107px]" label="Teilflächenbeziehung">
          <div className="grid grid-cols-[20px_20px_20px_20px] grid-rows-[21px_21px_21px] ml-[7px]">
            <Cell icon={<Px><rect x="2" y="2" width="14" height="14" fill="#f2f2f2" stroke="#444" /><rect x="5" y="5" width="8" height="8" fill={OR} /></Px>} />
            <Cell icon={<Px><circle cx="9" cy="9" r="7.5" fill="#ddd" stroke="#666" /><circle cx="9" cy="9" r="4.5" fill={OR} /></Px>} />
            <Cell icon={<Px><path d="M3 7l4-5v12l-4 3z" fill="#ddd" stroke="#555" /><path d="M11 2l4 4-1 5-3 5z" fill={OR} /><path d="M9 1v16" stroke="#555" strokeDasharray="2 1" /></Px>} />
            <Cell icon={<Px><path d="M1 3l4-2v11l-4 2z" fill="#ddd" stroke="#555" /><path d="M11 6l6-3v12l-6 3z" fill={OR} /><path d="M5 8l6 2" stroke="#555" /></Px>} />
            <Cell icon={<Px><path d="M2 9L15 3" stroke={OR} strokeWidth="1.3" /><path d="M3 15L16 9" stroke="#444" strokeWidth="1.3" /></Px>} />
            <Cell icon={<Px><rect x="2" y="3" width="13" height="13" fill="#eee" stroke="#444" /><path d="M4 12l9-6" stroke={OR} /><path d="M8 16h9" stroke="#444" /></Px>} />
            <Cell icon={<Px><circle cx="5" cy="4" r="3" fill="#ddd" stroke="#555" /><path d="M10 3h6M10 6h6" stroke="#444" /><circle cx="10" cy="13" r="4" fill={OR} /></Px>} />
            <Cell icon={<Px><path d="M1 5h16" stroke="#444" /><path d="M9 6l4 4-4 4-4-4z" fill={OR} /></Px>} />
            <Cell icon={<Px><path d="M3 1v15h14" fill="none" stroke="#333" /><path d="M3 9h7v7" fill="none" stroke={OR} /></Px>} />
            <Cell icon={<Px><path d="M1 11L16 2" stroke={OR} strokeWidth="1.2" /><circle cx="11" cy="12" r="4.5" fill="#bbb" stroke="#555" /></Px>} />
            <Cell icon={<Px><path d="M9 2v14M2 9h14" stroke="#444" /></Px>} />
            <Cell icon={<Px><path d="M5 9V6a4 4 0 0 1 8 0v3" fill="none" stroke="#444" strokeWidth="1.3" /><rect x="3" y="8" width="12" height="9" fill="#f2f2f2" stroke="#444" /><circle cx="9" cy="12" r="1.2" fill="#444" /></Px>} />
          </div>
        </Group>
        <Sep />

        <Group w="w-[42px]" label="Muster">
          <div className="flex flex-col pl-[8px]">
            <div className="h-[36px] flex items-center gap-[3px]">
              <Px><rect x="3" y="3" width="12" height="12" fill="none" stroke="#d0d0d0" strokeDasharray="2 1" /><circle cx="3" cy="3" r="1.8" fill="#fff" stroke="#c4c4c4" /><circle cx="9" cy="3" r="1.8" fill="#fff" stroke="#c4c4c4" /><circle cx="15" cy="3" r="1.8" fill="#fff" stroke="#c4c4c4" /><circle cx="3" cy="15" r="1.8" fill="#fff" stroke="#c4c4c4" /><circle cx="9" cy="15" r="1.8" fill="#fff" stroke="#c4c4c4" /><circle cx="15" cy="15" r="1.8" fill="#fff" stroke="#c4c4c4" /></Px>
              <Arrow />
            </div>
            <div className="h-[20px] flex items-center gap-[3px]">
              <Px><path d="M8 2L1 16h7z" fill="#f2f2f2" stroke="#d0d0d0" /><path d="M10 2l7 14h-7z" fill="#e1e1e1" stroke="#d0d0d0" /></Px>
              <Arrow />
            </div>
          </div>
        </Group>
        <Sep />

        <Group w="w-[252px]" label="Formatvorlage">
          <div className="grid grid-cols-[32px_32px_32px] grid-rows-[32px_32px] ml-[6px] w-[99px] shrink-0 pr-[3px]">
            <div className="flex items-center justify-center"><Wire /></div>
            <div className="flex items-center justify-center"><Wire /></div>
            <div className="flex items-center justify-center"><Wire back={false} /></div>
            <div className="flex items-center justify-center"><Wire solid /></div>
            <div className="flex items-center justify-center bg-white border-[3px] border-[#cde3ee]"><Wire solid edge /></div>
          </div>
          <Sep inner />
          <div className="flex-1 pl-[3px] pr-[4px] flex flex-col">
            <div className="h-[20px] pt-[1px] flex items-center text-[11.4px] text-[#1a1a1a]">
              <div className="ml-[3px] w-[18px] h-[18px] flex items-end font-['Liberation_Serif',serif] font-bold italic text-[#e0701a] leading-none"><span className="text-[8px] mb-[8px]">A</span><span className="text-[17px] -ml-[1px]">A</span></div>
              <span className="ml-[-1px]">Formatvorlage</span>
            </div>
            <div className="h-[21px] border border-[#a6a6a6] flex items-center justify-end pr-[6px]">
              <Px w={7} h={4}><path d="M0 0h7L3.500 4z" fill="#808080" /></Px>
            </div>
          </div>
        </Group>
        <Sep />
      </div>

      {/* prompt bar */}
      <div className="h-[25px] shrink-0 border-t-2 border-b-2 border-t-[#ababab] border-b-[#cfcfcf] flex items-stretch bg-white">
        <div className="w-[35px] bg-[#006487] flex items-center justify-center">
          <Px w={21} h={12}><rect x=".5" y=".5" width="20" height="11" fill="#b6c6cc" /><path d="M2 3h17M2 8h5M9 8h3M14 8h5" stroke="#5a6d75" strokeWidth="1.4" /></Px>
        </div>
        <div className="pl-[2px] text-[12px] leading-[19px] text-[#111] whitespace-nowrap tracking-[0.17px] font-['Noto_Sans',sans-serif]">
          Wählen Sie die Geometrie aus, klicken Sie auf einen zu extrudierenden oder zu rotierenden Bereich, oder klicken Sie auf einen Volumenkörper-Befehl, um 3D-Formelemente zu erstellen.
        </div>
      </div>

      {/* document tabs */}
      <div className="h-[33px] shrink-0 bg-white border-b-2 border-[#006487] flex items-end">
        <div className="ml-[2px] w-[150px] h-[28px] bg-[#006487] flex items-center text-white">
          <div className="ml-[18px]">
            <Px w={14} h={17}><path d="M3.500.5h6l4 4v12h-10z" fill="#fff" /><path d="M.5 8h7v8h-7z" fill="#5aa3bf" stroke="#fff" /></Px>
          </div>
          <span className="ml-[4px] mt-[1px] text-[11.6px] leading-none text-[#e8f1f5] whitespace-nowrap">Übung 1154.par</span>
          <div className="ml-auto mr-[4px]"><Px w={11} h={11}><path d="M1.500 1.500l8 8M9.500 1.500l-8 8" stroke="#fff" strokeWidth="2" /></Px></div>
        </div>
        <div className="flex-1" />
        <div className="h-[28px] flex items-center pb-[4px]">
          <Px w={6} h={10}><path d="M5 .5v9L.5 5z" fill="none" stroke="#777" /></Px>
          <div className="ml-[9px]"><Px w={6} h={10}><path d="M1 .5v9L5.500 5z" fill="none" stroke="#777" /></Px></div>
          <div className="ml-[7px]"><Px w={8} h={5}><path d="M0 0h8L4 5z" fill="#222" /></Px></div>
          <div className="ml-[4px] mr-[3px]"><Px w={11} h={11}><path d="M1 1l9 9M10 1l-9 9" stroke="#111" strokeWidth="1.6" /></Px></div>
        </div>
      </div>

      {/* viewport */}
      <main className="relative flex-1 bg-[#fafcfb]">
        <Part />
        <ViewCube />
      </main>

      {/* status bar */}
      <footer className="h-[21px] shrink-0 bg-[#006487] flex items-center text-[#e8f1f5]">
        <div className="flex-1" />
        <div className="w-[229px] text-[11.7px] leading-none whitespace-nowrap">0 Elemente sind ausgewählt</div>
        <div className="w-[22px] flex justify-center"><SBox><rect x="3" y="3" width="10" height="9" fill="none" stroke={OR} /><circle cx="10" cy="11" r="3" fill="none" stroke="#555" /></SBox></div>
        <div className="w-[22px] flex justify-center">
          <Px w={16} h={16}><circle cx="10" cy="6" r="5" fill="#fff" /><path d="M10 3v6M7.500 6h5" stroke={OR} /><path d="M6 10l-5 5" stroke="#fff" strokeWidth="2" /></Px>
        </div>
        <div className="w-[22px] flex justify-center"><SBox><path d="M3 3l3 3M13 3l-3 3M3 13l3-3M13 13l-3-3" stroke={OR} strokeWidth="1.5" /></SBox></div>
        <div className="w-[22px] flex justify-center"><SBox><path d="M3 8h10M3 8l2-2v4zM13 8l-2-2v4z" fill={OR} stroke={OR} /></SBox></div>
        <div className="w-[22px] flex justify-center"><SBox><circle cx="8" cy="8" r="4.5" fill="none" stroke={OR} strokeWidth="1.5" /><circle cx="8" cy="8" r="1.5" fill="#999" /></SBox></div>
        <div className="w-[22px] flex justify-center">
          <Px w={17} h={17}><rect x=".5" y=".5" width="11" height="13" fill="#c9d0d3" stroke="#eee" /><rect x="3" y="4" width="5" height="6" fill="#6f8a99" /><circle cx="12" cy="12" r="4.5" fill="#fff" stroke="#555" /><path d="M12 9.500v5M9.500 12h5" stroke="#333" /></Px>
        </div>
        <div className="w-[22px] flex justify-center">
          <Px w={17} h={17}><rect x="5" y="1" width="11" height="11" fill="#d9dcdc" stroke="#eee" /><rect x="8" y="4" width="5" height="5" fill="#888" /><rect x=".5" y="9" width="7" height="7" fill="#fff" stroke={OR} strokeWidth="1.5" /><rect x="3" y="11" width="3" height="3" fill={OR} /></Px>
        </div>
        <div className="w-[22px] flex justify-center">
          <Px w={18} h={18}><path d="M2 2l6-1v6l-6 1z" fill="#a9d6e8" stroke="#e8f4f8" strokeWidth=".6" /><path d="M6 8l6-3 6 3v8l-6 2-6-2z" fill="#d97c1f" /><path d="M6 8l6 2 6-2-6-3z" fill="#f0a650" /></Px>
        </div>
        <div className="w-[18px] flex justify-center">
          <div className="w-[13px] h-[13px] rounded-full bg-white flex items-center justify-center"><div className="w-[7px] h-[2px] bg-[#e3761c]" /></div>
        </div>
        <div className="w-[116px] flex items-center">
          <div className="ml-[2px] w-[36px] h-px bg-white" />
          <Px w={8} h={13}><path d="M0 0h8v8l-4 5-4-5z" fill="#fff" /><path d="M4 2v5" stroke={OR} strokeWidth="1.5" /></Px>
          <div className="w-[70px] h-px bg-white" />
        </div>
        <div className="w-[20px] flex justify-center">
          <div className="w-[13px] h-[13px] rounded-full bg-white flex items-center justify-center"><Px w={9} h={9}><path d="M4.500 1v7M1 4.500h7" stroke={OR} strokeWidth="1.6" /></Px></div>
        </div>
        <div className="w-[20px] flex justify-center">
          <Px w={14} h={11}><rect width="14" height="11" rx="1.5" fill="#e8000d" /><path d="M5.500 3l4 2.500-4 2.500z" fill="#fff" /></Px>
        </div>
        <div className="ml-[5px] w-[20px] flex justify-center">
          <div className="w-[15px] h-[15px] rounded-full bg-[#dfe3e4] flex items-center justify-center"><div className="w-[8px] h-[8px] rounded-full bg-[#d2071b]" /></div>
        </div>
        <div className="ml-[4px] w-[20px] mr-[1px] flex justify-center">
          <Px w={16} h={16}><rect width="16" height="16" rx="3" fill="#fff" /><path d="M8 12V4M5.500 6.500L8 4l2.500 2.500M4 12v1.500h8V12" fill="none" stroke="#d9534f" /></Px>
        </div>
      </footer>
    </div>
  );
}
